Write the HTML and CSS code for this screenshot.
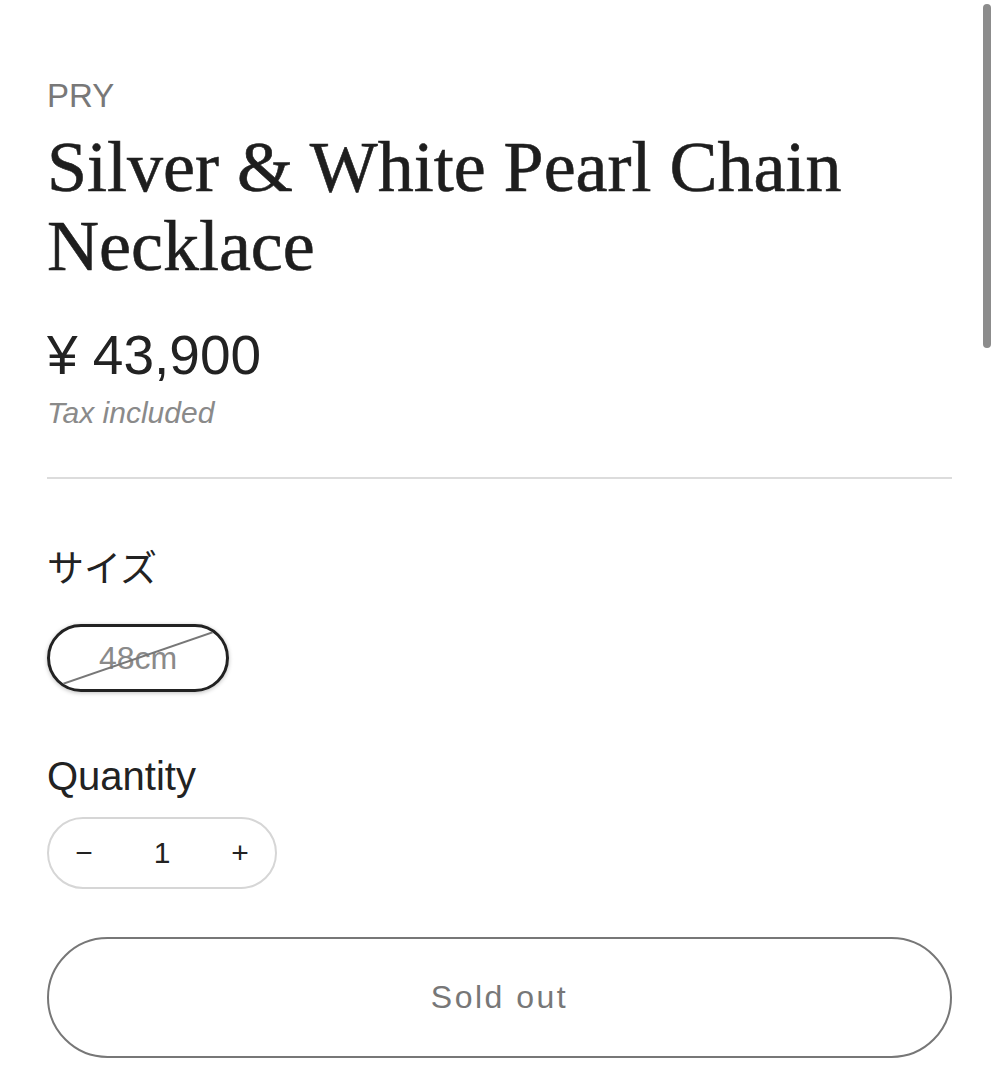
FILE: index.html
```html
<!DOCTYPE html>
<html lang="ja">
<head>
    <meta charset="UTF-8">
    <meta name="viewport" content="width=device-width, initial-scale=1.0">
    <title>Silver &amp; White Pearl Chain Necklace</title>
    <link rel="stylesheet" href="styles.css">
</head>
<body>
    <div class="product">
        <p class="vendor">PRY</p>
        <h1 class="title">Silver &amp; White Pearl Chain Necklace</h1>
        <div class="price">¥ 43,900</div>
        <p class="tax">Tax included</p>
        <hr class="divider">

        <div class="option size">
            <p class="label">サイズ</p>
            <div class="pills">
                <span class="pill sold">48cm</span>
            </div>
        </div>

        <div class="option quantity">
            <p class="label">Quantity</p>
            <div class="qty">
                <button class="qty-btn">−</button>
                <span class="qty-val">1</span>
                <button class="qty-btn">+</button>
            </div>
        </div>

        <button class="soldout" disabled>Sold out</button>
    </div>
    <div class="scrollbar"></div>
</body>
</html>
```

FILE: styles.css
```css
* {
    margin: 0;
    padding: 0;
    box-sizing: border-box;
}
body {
    font-family: "Liberation Sans", Arial, "Noto Sans CJK JP", sans-serif;
    background-color: #fff;
    color: #222;
    overflow: hidden;
}
.product {
    padding: 78px 47px 0 47px;
    display: flex;
    flex-direction: column;
}
.vendor {
    font-size: 33px;
    color: #787878;
    line-height: 36px;
}
.title {
    font-family: "Liberation Serif", "Times New Roman", serif;
    font-weight: 400;
    font-size: 72px;
    line-height: 79px;
    color: #1e1e1e;
    -webkit-text-stroke: 0.6px #1e1e1e;
    margin-top: 14px;
    max-width: 880px;
}
.price {
    font-size: 55px;
    line-height: 60px;
    margin-top: 39px;
    color: #222;
}
.tax {
    font-style: italic;
    font-size: 30px;
    line-height: 36px;
    color: #8a8a8a;
    margin-top: 10px;
}
.divider {
    border: none;
    border-top: 2px solid #dcdcdc;
    margin-top: 46px;
}
.option {
    display: flex;
    flex-direction: column;
}
.label {
    font-size: 37px;
    line-height: 44px;
    color: #222;
}
.size .label {
    margin-top: 69px;
}
.quantity .label {
    font-size: 40px;
    line-height: 46px;
    margin-top: 61px;
}
.pills {
    margin-top: 32px;
    display: flex;
}
.pill {
    position: relative;
    display: inline-flex;
    align-items: center;
    justify-content: center;
    width: 182px;
    height: 68px;
    border: 3px solid #222;
    border-radius: 34px;
    font-size: 32px;
    color: #8a8a8a;
    overflow: hidden;
    box-shadow: 0 1px 4px rgba(0, 0, 0, 0.25);
}
.pill.sold::after {
    content: "";
    position: absolute;
    left: 50%;
    top: 50%;
    width: 200px;
    height: 2px;
    background: #777;
    transform: translate(-50%, -50%) rotate(-19deg);
}
.qty {
    margin-top: 18px;
    width: 230px;
    height: 72px;
    border: 2px solid #d6d6d6;
    border-radius: 36px;
    display: flex;
    align-items: center;
    justify-content: space-between;
    padding: 0 10px;
}
.qty-btn {
    background: none;
    border: none;
    font-family: inherit;
    font-size: 30px;
    color: #222;
    width: 50px;
    cursor: pointer;
}
.qty-val {
    font-size: 30px;
    color: #222;
}
.soldout {
    margin-top: 48px;
    height: 121px;
    border: 2px solid #777;
    border-radius: 61px;
    background: #fff;
    font-family: inherit;
    font-size: 32px;
    letter-spacing: 2.5px;
    color: #777;
}
.scrollbar {
    position: absolute;
    right: 8px;
    top: 4px;
    width: 8px;
    height: 344px;
    border-radius: 4px;
    background: #8c8c8c;
}
```
